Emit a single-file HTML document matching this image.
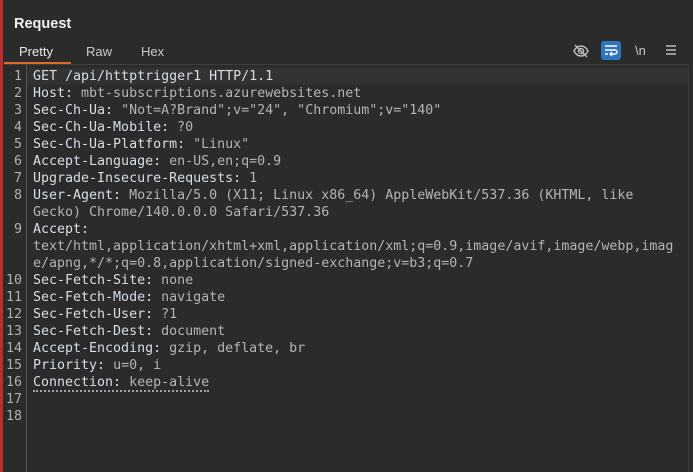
<!DOCTYPE html>
<html><head><meta charset="utf-8"><style>
body{margin:0;width:693px;height:472px;background:#2b2b2b;overflow:hidden;position:relative;font-family:"Liberation Sans",sans-serif}
.red{position:absolute;left:0;top:0;width:3px;height:472px;background:#b8302e}
.title{position:absolute;left:14px;top:16px;color:#f0f0f0;font-weight:bold;font-size:14.5px}
.tab{position:absolute;top:44px;color:#c8c8c8;font-size:13px}
.ul{position:absolute;left:4px;top:62px;width:67px;height:2px;background:#e06b2b}
.hl{position:absolute;left:4px;top:64px;width:684px;height:1px;background:#3e3e3e}
.rb{position:absolute;left:688px;top:65px;width:1px;height:407px;background:#3a3a3a}
.gut{position:absolute;left:26px;top:65px;width:1px;height:407px;background:#555}
.row1{position:absolute;left:27px;top:68px;width:661px;height:17px;background:#323232}
pre{position:absolute;margin:0;top:68px;font-family:"DejaVu Sans Mono","Liberation Mono",monospace;font-size:13.3px;line-height:17px;color:#b4b4b4}
.n{left:2px;width:20px;text-align:right;color:#b0b0b0}
.c{left:33px}
.k{color:#d6dee6}
.d{border-bottom:2px dotted #9aa4ae}
.btn{position:absolute;left:601px;top:41px;width:20px;height:19px;background:#2f74c0;border-radius:3px}
</style></head><body>
<div class="red"></div>
<div class="title">Request</div>
<div class="tab" style="left:19px;color:#e8e8e8">Pretty</div>
<div class="tab" style="left:86px">Raw</div>
<div class="tab" style="left:141px">Hex</div>
<div class="ul"></div><div class="hl"></div>
<svg style="position:absolute;left:572px;top:42px" width="18" height="18" viewBox="0 0 18 18" fill="none" stroke="#bbb" stroke-width="1.5"><path d="M2 9c2-4 5-5 7-5s5 1 7 5c-2 4-5 5-7 5s-5-1-7-5z"/><circle cx="9" cy="9" r="2.5"/><path d="M3 3l12 12"/></svg>
<div class="btn"></div>
<svg style="position:absolute;left:603px;top:43px" width="16" height="15" viewBox="0 0 16 15" fill="none" stroke="#fff" stroke-width="1.4"><path d="M2 3h12M2 7h10a2 2 0 010 4H8M2 11h3"/><path d="M9 9l-2 2 2 2"/></svg>
<div style="position:absolute;left:635px;top:43px;color:#c8c8c8;font-size:13px">\n</div>
<svg style="position:absolute;left:665px;top:44px" width="12" height="12" viewBox="0 0 12 12" stroke="#bbb" stroke-width="1.6"><path d="M1 2h10M1 6h10M1 10h10"/></svg>
<div class="rb"></div><div class="gut"></div><div class="row1"></div>
<pre class="n">1
2
3
4
5
6
7
8

9


10
11
12
13
14
15
16
17
18</pre>
<pre class="c"><span class="k">GET /api/httptrigger1 HTTP/1.1</span>
<span class="k">Host:</span> mbt-subscriptions.azurewebsites.net
<span class="k">Sec-Ch-Ua:</span> "Not=A?Brand";v="24", "Chromium";v="140"
<span class="k">Sec-Ch-Ua-Mobile:</span> ?0
<span class="k">Sec-Ch-Ua-Platform:</span> "Linux"
<span class="k">Accept-Language:</span> en-US,en;q=0.9
<span class="k">Upgrade-Insecure-Requests:</span> 1
<span class="k">User-Agent:</span> Mozilla/5.0 (X11; Linux x86_64) AppleWebKit/537.36 (KHTML, like
Gecko) Chrome/140.0.0.0 Safari/537.36
<span class="k">Accept:</span>
text/html,application/xhtml+xml,application/xml;q=0.9,image/avif,image/webp,imag
e/apng,*/*;q=0.8,application/signed-exchange;v=b3;q=0.7
<span class="k">Sec-Fetch-Site:</span> none
<span class="k">Sec-Fetch-Mode:</span> navigate
<span class="k">Sec-Fetch-User:</span> ?1
<span class="k">Sec-Fetch-Dest:</span> document
<span class="k">Accept-Encoding:</span> gzip, deflate, br
<span class="k">Priority:</span> u=0, i
<span class="d"><span class="k">Connection:</span> keep-alive</span>
</pre>
</body></html>
